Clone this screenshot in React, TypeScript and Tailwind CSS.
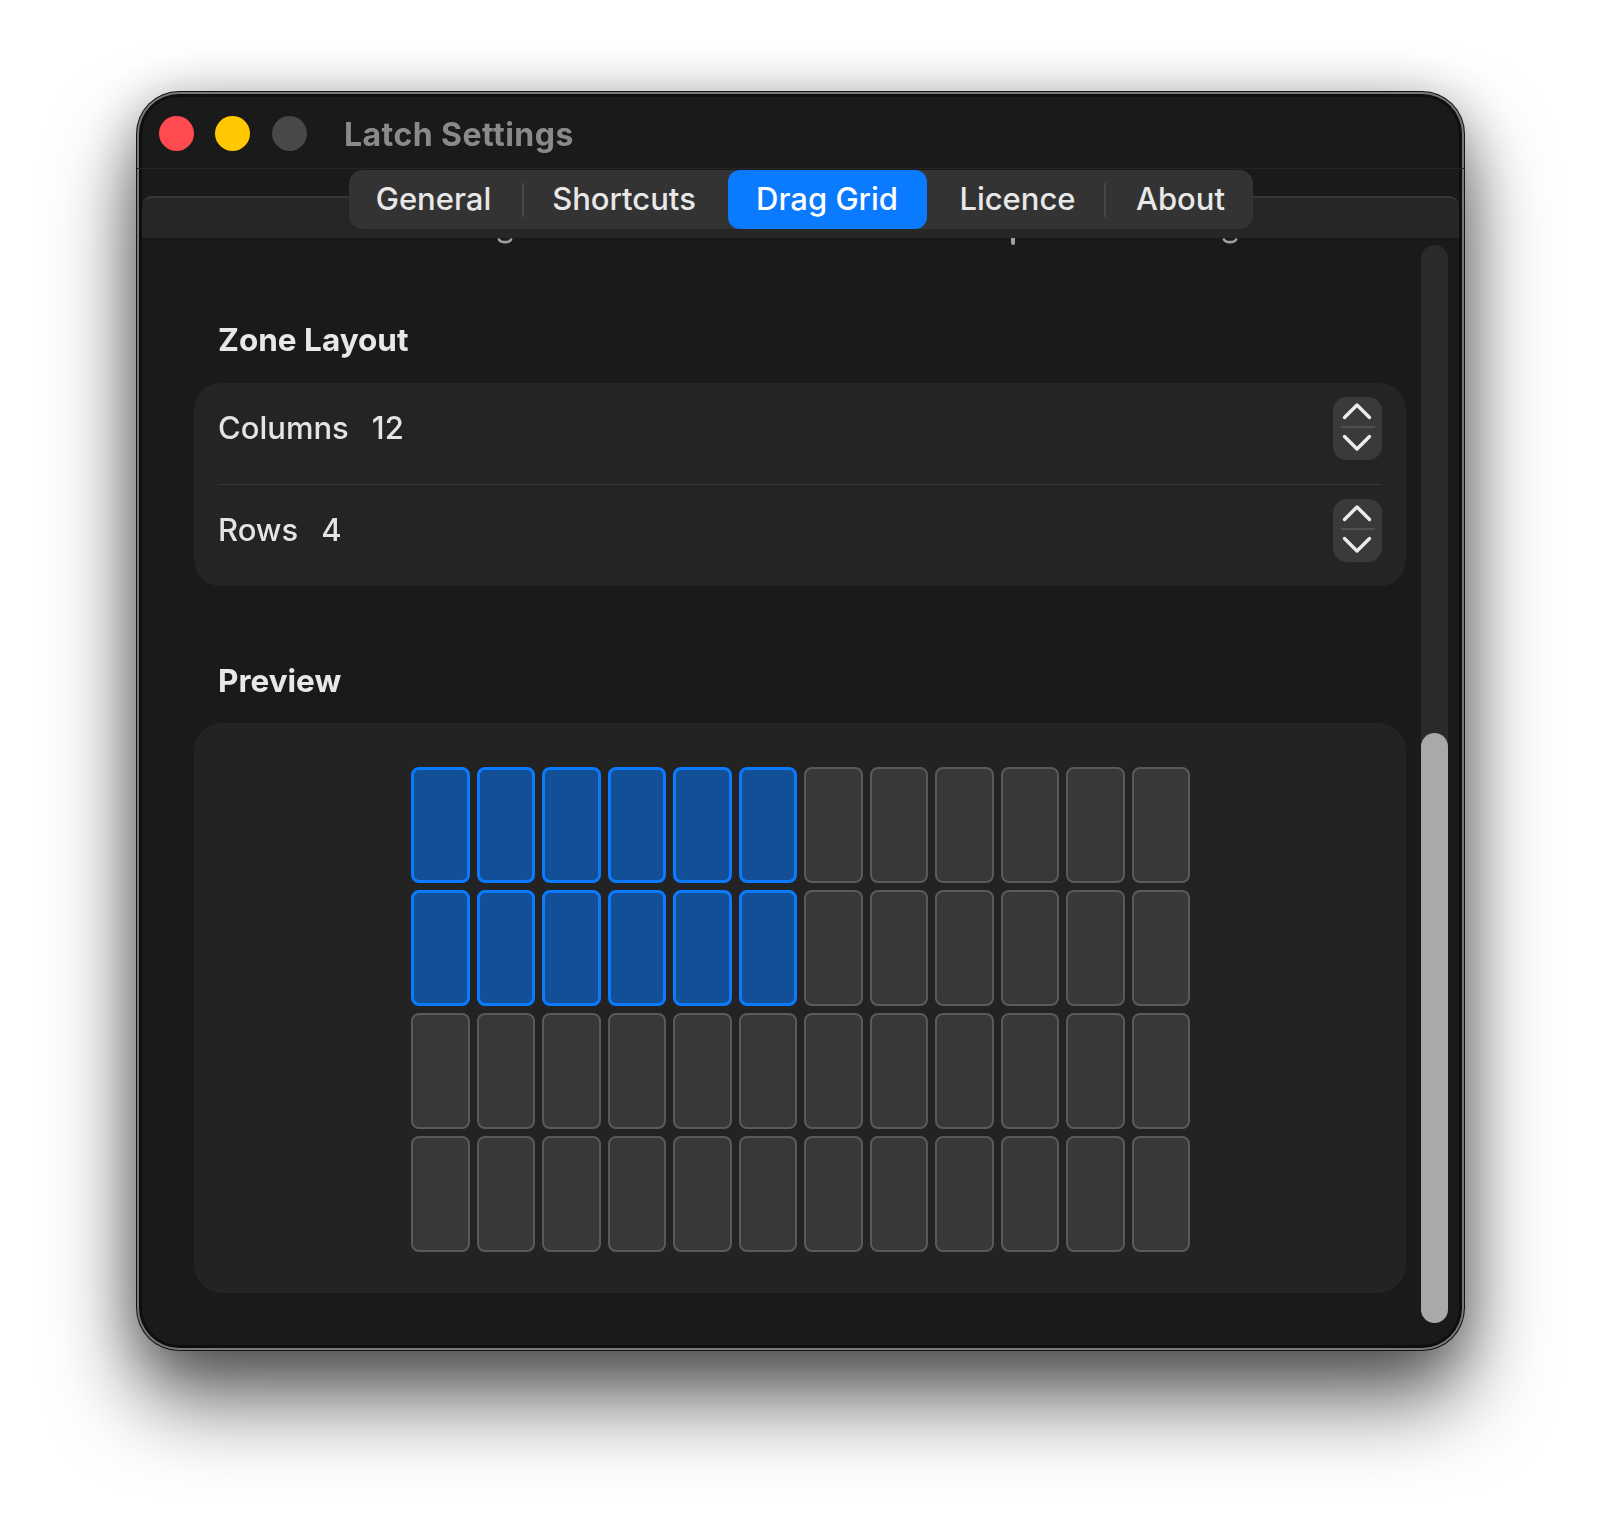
import React from 'react';

const TABS = [
  { label: 'General', width: 'w-[174px]', pad: 'pr-[4px]' },
  { label: 'Shortcuts', width: 'w-[205px]', pad: 'pr-[2px]' },
  { label: 'Drag Grid', width: 'w-[199px]', active: true, pad: '' },
  { label: 'Licence', width: 'w-[177px]', pad: 'pl-[5px]' },
  { label: 'About', width: 'w-[149px]', pad: 'pl-[5px]' },
];

function Stepper() {
  return (
    <div className="flex h-[63px] w-[49px] flex-col items-center rounded-[14px] bg-[#3a3a3a]">
      <svg className="mr-[2px] mt-[5px] h-[18px] w-[30px]" viewBox="0 0 30 18" fill="none">
        <path d="M2.5 15.5 15 3l12.5 12.5" stroke="#ececec" strokeWidth="3.4" strokeLinecap="round" strokeLinejoin="round" />
      </svg>
      <div className="mt-[6px] h-[2px] w-[34px] bg-[#505050]" />
      <svg className="mr-[2px] mt-[6px] h-[18px] w-[30px]" viewBox="0 0 30 18" fill="none">
        <path d="M2.5 2.5 15 15 27.5 2.5" stroke="#ececec" strokeWidth="3.4" strokeLinecap="round" strokeLinejoin="round" />
      </svg>
    </div>
  );
}

function StepperRow({ label, value }: { label: string; value: string }) {
  return (
    <div className="flex h-[101px] items-center justify-between pb-[11px] pl-[24px] pr-[24px]">
      <div className="flex gap-[23px] text-[31px] font-medium text-[#e4e4e4]">
        <span>{label}</span>
        <span>{value}</span>
      </div>
      <Stepper />
    </div>
  );
}

function Cell({ on }: { on: boolean }) {
  return (
    <div
      className={
        on
          ? 'h-[116px] rounded-[8px] border-[3px] border-[#0a7aff] bg-[#124f96]'
          : 'h-[116px] rounded-[8px] border-2 border-[#5a5a5a] bg-[#383838]'
      }
    />
  );
}

// tails of the line scrolled away under the tab strip
function Tail({ className }: { className: string }) {
  return (
    <svg className={className} width="16" height="8" viewBox="0 0 16 8" fill="none">
      <path d="M2 1.5c1.5 3.5 10.5 3.5 12 0" stroke="#a0a0a0" strokeWidth="2.6" strokeLinecap="round" />
    </svg>
  );
}

export default function App() {
  const cells = [...Array(48)].map((_, i) => i % 12 < 6 && i < 24);

  return (
    <div className="h-[1531px] w-[1600px] overflow-hidden bg-white pl-[137px] pt-[92px] font-['Inter','Liberation_Sans',sans-serif]">
      <div className="h-[1258px] w-[1327px] overflow-hidden rounded-[42px] bg-[#1a1a1a] shadow-[inset_0_0_0_2px_#787878,inset_0_0_0_5px_#0e0e0e,0_0_0_1px_#141414,0_50px_85px_rgba(0,0,0,0.62),0_8px_55px_rgba(0,0,0,0.3)] blur-[0.7px]">
        {/* title bar */}
        <div className="flex h-[77px] items-center border-b border-[#242424] pl-[22px] pt-[6px]">
          <div className="h-[35px] w-[35px] rounded-full bg-[#ff4a4f]" />
          <div className="ml-[21px] h-[35px] w-[35px] rounded-full bg-[#ffc800]" />
          <div className="ml-[22px] h-[35px] w-[35px] rounded-full bg-[#484848]" />
          <span className="ml-[37px] pt-[3px] text-[32px] font-bold tracking-[0.45px] text-[#8a8a8a]">Latch Settings</span>
        </div>

        {/* tab strip */}
        <div className="relative flex h-[69px] justify-center pt-[1px]">
          <div className="absolute bottom-0 left-[5px] right-[5px] h-[42px] rounded-t-[10px] border-t-2 border-[#383838] bg-[#262626]" />
          <div className="relative flex h-[59px] items-stretch rounded-[14px] bg-[#333333] text-[31px] font-medium text-[#e8e8e8]">
            {TABS.map(tab => (
              <div
                key={tab.label}
                className={`flex items-center justify-center ${tab.width} ${tab.pad} ${tab.active ? 'rounded-[12px] bg-[#0a7aff] text-white' : ''}`}
              >
                {tab.label}
              </div>
            ))}
            <div className="absolute left-[173px] top-[13px] h-[34px] w-[2px] bg-[#464646]" />
            <div className="absolute left-[755px] top-[13px] h-[34px] w-[2px] bg-[#464646]" />
          </div>
        </div>

        {/* scroll area */}
        <div className="flex pl-[57px]">
          <div className="w-[1212px]">
            <div className="flex h-[8px] items-start overflow-hidden">
              <Tail className="ml-[303px]" />
              <div className="ml-[498px] h-[7px] w-[4px] rounded-b-sm bg-[#a0a0a0]" />
              <Tail className="ml-[207px]" />
            </div>
            <div className="mt-[74px] flex h-[40px] items-center pl-[24px] text-[31.5px] font-bold text-[#e8e8e8]">Zone Layout</div>
            <div className="mt-[23px] rounded-[26px] bg-[#242424]">
              <StepperRow label="Columns" value="12" />
              <div className="ml-[24px] mr-[24px] h-[1px] bg-[#353535]" />
              <StepperRow label="Rows" value="4" />
            </div>
            <div className="mt-[75px] flex h-[40px] items-center pl-[24px] text-[31.5px] font-bold text-[#e8e8e8]">Preview</div>
            <div className="mt-[22px] h-[570px] rounded-[28px] bg-[#232323] pt-[44px]">
              <div className="ml-[217px] grid w-[779px] grid-cols-12 gap-[7px]">
                {cells.map((on, i) => (
                  <Cell key={i} on={on} />
                ))}
              </div>
            </div>
          </div>

          {/* scrollbar */}
          <div className="ml-[15px] mt-[7px] flex h-[1078px] w-[27px] flex-col justify-end rounded-full bg-[#2a2a2a]">
            <div className="h-[590px] rounded-full bg-[#a9a9a9]" />
          </div>
        </div>
      </div>
    </div>
  );
}
